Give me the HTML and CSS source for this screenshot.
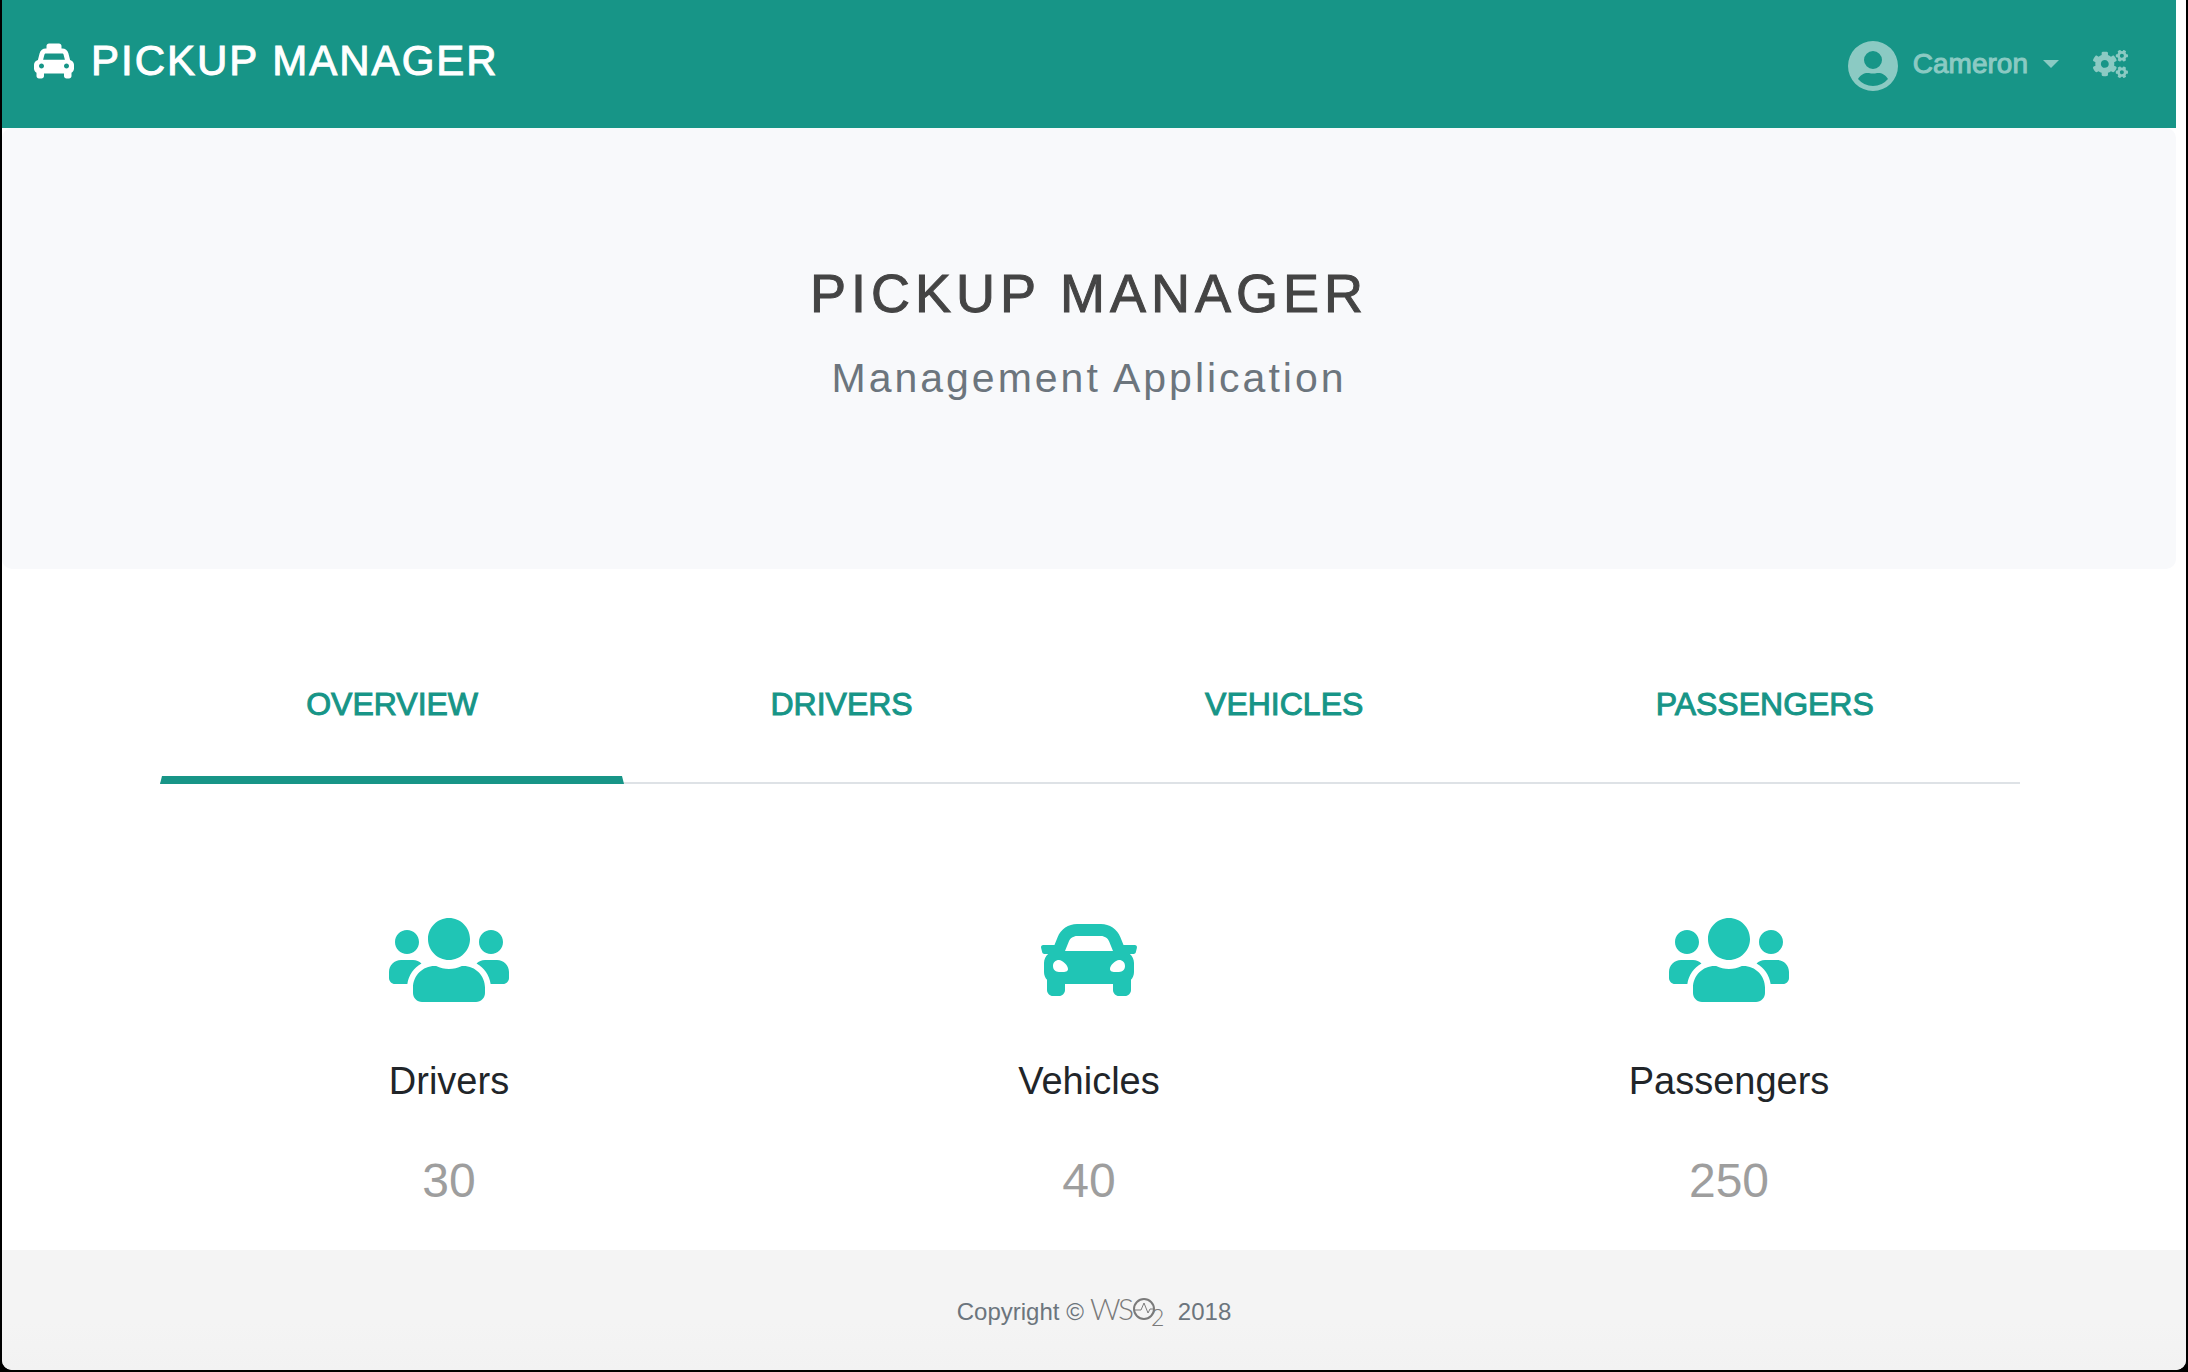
FILE: index.html
```html
<!DOCTYPE html>
<html lang="en">
<head>
<meta charset="utf-8">
<title>Pickup Manager</title>
<link rel="stylesheet" href="styles.css">
</head>
<body>
<svg class="sprite" aria-hidden="true">
  <symbol id="icon-taxi" viewBox="0 0 512 512"><path d="M462 241.640l-22-84.840c-9.600-35.200-41.600-60.800-76.800-60.800H352V64c0-17.670-14.330-32-32-32H192c-17.670 0-32 14.330-32 32v32h-11.200c-35.200 0-67.200 25.600-76.800 60.800l-22 84.840C21.410 248.040 0 273.470 0 304v48c0 23.630 12.950 44.040 32 55.120V448c0 17.670 14.330 32 32 32h32c17.670 0 32-14.330 32-32v-32h256v32c0 17.670 14.330 32 32 32h32c17.670 0 32-14.330 32-32v-40.880c19.050-11.090 32-31.500 32-55.120v-48c0-30.530-21.410-55.960-50-62.360zM96 352c-17.670 0-32-14.330-32-32s14.330-32 32-32 32 14.330 32 32-14.330 32-32 32zm20.550-112l17.200-66.360c2.230-8.160 9.590-13.640 15.060-13.640h214.400c5.470 0 12.830 5.480 14.850 12.860L395.480 240H116.550zM416 352c-17.670 0-32-14.330-32-32s14.330-32 32-32 32 14.330 32 32-14.330 32-32 32z"/></symbol>
  <symbol id="icon-car" viewBox="0 0 512 512"><path d="M499.990 176h-59.870l-16.640-41.600C406.380 91.630 365.570 64 319.500 64h-127c-46.060 0-86.880 27.630-103.990 70.400L71.870 176H12.010C4.200 176-1.530 183.340.370 190.910l6 24C7.700 220.250 12.500 224 18.010 224h20.070C24.650 235.730 16 252.780 16 272v48c0 16.120 6.160 30.670 16 41.930V416c0 17.670 14.330 32 32 32h32c17.670 0 32-14.330 32-32v-32h256v32c0 17.670 14.330 32 32 32h32c17.670 0 32-14.330 32-32v-54.070c9.840-11.250 16-25.800 16-41.930v-48c0-19.220-8.650-36.270-22.070-48H494c5.510 0 10.310-3.750 11.640-9.090l6-24c1.890-7.570-3.840-14.910-11.650-14.910zm-352.060-17.830c7.290-18.220 24.940-30.170 44.570-30.170h127c19.630 0 37.280 11.950 44.570 30.170L384 208H128l19.930-49.830zM96 319.800c-19.200 0-32-12.760-32-31.900S76.800 256 96 256s48 28.710 48 47.850-28.800 15.950-48 15.950zm320 0c-19.200 0-48 3.190-48-15.950S396.800 256 416 256s32 12.760 32 31.900-12.800 31.900-32 31.900z"/></symbol>
  <symbol id="icon-users" viewBox="0 0 640 512"><path d="M96 224c35.300 0 64-28.700 64-64s-28.700-64-64-64-64 28.700-64 64 28.700 64 64 64zm448 0c35.300 0 64-28.700 64-64s-28.700-64-64-64-64 28.700-64 64 28.700 64 64 64zm32 32h-64c-17.600 0-33.500 7.100-45.100 18.600 40.300 22.100 68.900 62 75.100 109.400h66c17.700 0 32-14.300 32-32v-32c0-35.300-28.700-64-64-64zm-256 0c61.900 0 112-50.100 112-112S381.900 32 320 32 208 82.100 208 144s50.100 112 112 112zm76.800 32h-8.300c-20.800 10-43.900 16-68.500 16s-47.600-6-68.500-16h-8.300C179.600 288 128 339.600 128 403.200V432c0 26.500 21.500 48 48 48h288c26.500 0 48-21.500 48-48v-28.800c0-63.600-51.600-115.200-115.200-115.200zm-223.700-13.400C161.500 263.100 145.600 256 128 256H64c-35.300 0-64 28.700-64 64v32c0 17.700 14.300 32 32 32h65.900c6.300-47.400 34.900-87.300 75.200-109.400z"/></symbol>
  <symbol id="icon-cogs" viewBox="0 0 640 512">
    <path id="small-cog" d="M512.100 191l-8.200 14.300c-3 5.300-9.400 7.500-15.100 5.400-11.800-4.400-22.600-10.700-32.100-18.600-4.600-3.800-5.800-10.500-2.800-15.700l8.200-14.300c-6.900-8-12.300-17.300-15.900-27.400h-16.500c-6 0-11.200-4.300-12.200-10.300-2-12-2.100-24.600 0-37.100 1-6 6.200-10.400 12.200-10.400h16.500c3.600-10.100 9-19.400 15.900-27.400l-8.200-14.300c-3-5.200-1.900-11.900 2.800-15.700 9.500-7.900 20.400-14.200 32.100-18.600 5.700-2.100 12.100.1 15.100 5.400l8.200 14.300c10.500-1.900 21.200-1.900 31.700 0L552 6.300c3-5.300 9.400-7.500 15.100-5.400 11.800 4.400 22.600 10.700 32.100 18.600 4.600 3.800 5.800 10.500 2.800 15.700l-8.200 14.300c6.900 8 12.300 17.300 15.900 27.400h16.500c6 0 11.200 4.300 12.200 10.300 2 12 2.100 24.600 0 37.100-1 6-6.200 10.400-12.200 10.400h-16.500c-3.600 10.100-9 19.400-15.900 27.400l8.200 14.300c3 5.200 1.900 11.900-2.800 15.700-9.500 7.900-20.400 14.200-32.100 18.600-5.700 2.100-12.100-.1-15.100-5.400l-8.200-14.300c-10.400 1.900-21.200 1.900-31.700 0zm-10.500-58.800c38.500 29.600 82.400-14.300 52.800-52.800-38.500-29.700-82.400 14.300-52.800 52.800z"/>
    <use href="#small-cog" y="300"/>
    <path d="M386.300 286.100l33.700 16.800c10.100 5.800 14.500 18.100 10.500 29.100-8.900 24.200-26.400 46.400-42.600 65.800-7.400 8.900-20.200 11.100-30.300 5.300l-29.100-16.800c-16 13.700-34.600 24.600-54.900 31.700v33.600c0 11.600-8.300 21.600-19.700 23.600-24.600 4.200-50.400 4.400-75.900 0-11.500-2-20-11.900-20-23.600V418c-20.300-7.200-38.900-18-54.900-31.700L74 403c-10 5.800-22.900 3.600-30.300-5.300-16.200-19.400-33.300-41.600-42.200-65.700-4-10.900.4-23.200 10.500-29.100l33.300-16.800c-3.900-20.900-3.900-42.400 0-63.400L12 205.800c-10.100-5.800-14.600-18.100-10.500-29 8.900-24.200 26-46.400 42.200-65.800 7.400-8.900 20.200-11.100 30.300-5.300l29.100 16.800c16-13.700 34.600-24.600 54.900-31.700V57.100c0-11.500 8.200-21.500 19.600-23.500 24.600-4.200 50.500-4.400 76-.1 11.500 2 20 11.900 20 23.600v33.600c20.300 7.200 38.900 18 54.900 31.700l29.100-16.800c10-5.800 22.900-3.600 30.300 5.300 16.200 19.400 33.200 41.600 42.100 65.800 4 10.900.1 23.200-10 29.100l-33.700 16.800c3.900 21 3.900 42.500 0 63.500zm-117.600 21.100c59.200-77-28.700-164.900-105.700-105.700-59.200 77 28.700 164.900 105.700 105.700z"/>
  </symbol>
  <symbol id="icon-user" viewBox="0 0 50 50"><path fill-rule="evenodd" d="M25 0a25 25 0 1 1 0 50a25 25 0 1 1 0-50zM25 10a9 9 0 1 0 0 18a9 9 0 1 0 0-18zM10 38Q16 45 25 45T40 38C37 33 33 31.500 29 32Q25 33 21 32C17 31.500 13 33 10 38z"/></symbol>
</svg>

<div class="window">
  <header class="navbar">
    <a class="brand" href="#">
      <svg class="brand-icon" aria-hidden="true"><use href="#icon-taxi"/></svg>
      <span>PICKUP MANAGER</span>
    </a>
    <div class="account">
      <button class="user-menu" type="button">
        <svg class="user-icon" aria-hidden="true"><use href="#icon-user"/></svg>
        <span>Cameron</span>
        <span class="caret"></span>
      </button>
      <button class="settings" type="button" aria-label="Settings">
        <svg class="cogs-icon" aria-hidden="true"><use href="#icon-cogs"/></svg>
      </button>
    </div>
  </header>

  <main class="content">
    <section class="hero">
      <h1 class="hero-title">PICKUP MANAGER</h1>
      <p class="hero-subtitle">Management Application</p>
    </section>

    <div class="container">
      <nav class="tabs">
        <a class="tab tab-active" href="#overview" aria-current="page">OVERVIEW</a>
        <a class="tab" href="#drivers">DRIVERS</a>
        <a class="tab" href="#vehicles">VEHICLES</a>
        <a class="tab" href="#passengers">PASSENGERS</a>
      </nav>
      <section class="stats" id="overview">
        <article class="stat">
          <svg class="stat-icon" aria-hidden="true"><use href="#icon-users"/></svg>
          <h2 class="stat-label">Drivers</h2>
          <p class="stat-value">30</p>
        </article>
        <article class="stat">
          <svg class="stat-icon" aria-hidden="true"><use href="#icon-car"/></svg>
          <h2 class="stat-label">Vehicles</h2>
          <p class="stat-value">40</p>
        </article>
        <article class="stat">
          <svg class="stat-icon" aria-hidden="true"><use href="#icon-users"/></svg>
          <h2 class="stat-label">Passengers</h2>
          <p class="stat-value">250</p>
        </article>
      </section>
    </div>
  </main>

  <footer class="footer">
    <span>Copyright ©</span>
    <svg class="logo" viewBox="0 0 74 30" role="img" aria-label="WSO2">
      <text class="logo-text" x="0" y="22">W</text>
      <text class="logo-text" x="28" y="22">S</text>
      <circle cx="54" cy="11" r="10"/>
      <path d="M45 12h6l3-7l4 10l2-4h4"/>
      <text class="logo-sub" x="61" y="28">2</text>
    </svg>
    <span>2018</span>
  </footer>
</div>
</body>
</html>
```
FILE: styles.css
```css
* {
  box-sizing: border-box;
}

body {
  margin: 0;
  background: #000;
  color: #212529;
  font-family: "Liberation Sans", Arial, sans-serif;
}

h1, h2, p {
  margin: 0;
  font-weight: 400;
}

svg {
  display: block;
  fill: currentColor;
}

button {
  padding: 0;
  border: 0;
  background: none;
  color: inherit;
  font: inherit;
}

.sprite {
  position: absolute;
  width: 0;
  height: 0;
}

.window {
  display: flex;
  flex-direction: column;
  min-height: calc(100vh - 2px);
  margin: 0 2px 2px;
  overflow: hidden;
  border-radius: 0 0 10px 10px;
  background: #fff;
}

/* Top bar */
.navbar {
  display: flex;
  justify-content: space-between;
  height: 128px;
  margin-right: 10px;
  padding: 36px 48px 0 32px;
  background: #179587;
}

.brand {
  display: flex;
  align-items: center;
  gap: 17px;
  height: 50px;
  color: #fff;
  font-size: 42px;
  letter-spacing: 2px;
  line-height: 52px;
  text-decoration: none;
  -webkit-text-stroke: 1px currentColor;
}

.brand-icon {
  width: 40px;
  height: 40px;
}

.account {
  display: flex;
  align-items: center;
  gap: 34px;
  height: 56px;
  color: #8bcac3;
  font-size: 28px;
  line-height: 32px;
}

.user-menu {
  display: flex;
  align-items: center;
  gap: 15px;
  -webkit-text-stroke: 1px currentColor;
}

.user-icon {
  width: 50px;
  height: 50px;
  margin-top: 4px;
}

.caret {
  border: 8px solid transparent;
  border-top-color: currentColor;
  border-bottom: 0;
}

.cogs-icon {
  width: 35px;
  height: 28px;
}

/* Hero */
.content {
  flex: 1;
  margin-right: 10px;
}

.hero {
  padding: 133px 0 167px;
  border-radius: 10px;
  background: #f8f9fb;
  text-align: center;
}

.hero-title {
  margin-bottom: 29px;
  color: #444;
  font-size: 54px;
  letter-spacing: 5px;
  line-height: 64px;
  -webkit-text-stroke: 1px currentColor;
}

.hero-subtitle {
  color: #6c757d;
  font-size: 41px;
  font-weight: 300;
  letter-spacing: 3px;
  line-height: 48px;
}

/* Tabs */
.container {
  max-width: 1920px;
  margin: 0 auto;
  padding-top: 63px;
}

.tabs {
  display: flex;
  margin: 0 29px 0 31px;
  border-bottom: 2px solid #dee2e6;
}

.tab {
  flex: 1 1 auto;
  margin-bottom: -2px;
  padding: 48px 0;
  border: solid transparent;
  border-width: 0 2px 8px;
  color: #179587;
  font-size: 32px;
  line-height: 48px;
  text-align: center;
  text-decoration: none;
  -webkit-text-stroke: 1px currentColor;
}

.tab-active {
  border-bottom-color: #179587;
}

/* Overview counters */
.stats {
  display: grid;
  grid-template-columns: repeat(3, 1fr);
  padding: 128px 0 40px;
}

.stat {
  display: flex;
  flex-direction: column;
  align-items: center;
  gap: 48px;
}

.stat-icon {
  width: 120px;
  height: 96px;
  color: #20c5b5;
}

.stat-label {
  font-size: 38px;
  line-height: 50px;
}

.stat-value {
  color: #9e9e9e;
  font-size: 48px;
  line-height: 54px;
}

/* Footer */
.footer {
  display: flex;
  align-items: center;
  justify-content: center;
  gap: 6px;
  height: 120px;
  padding-top: 4px;
  background: linear-gradient(#f4f4f4 60%, #f2f2f2);
  color: #6c757d;
  font-size: 24px;
  line-height: 32px;
}

.logo {
  width: 74px;
  height: 30px;
  margin: 2px 8px 0 0;
  overflow: visible;
  fill: none;
  stroke: #7a7a7a;
  stroke-width: 2px;
}

.logo path {
  stroke-width: 1px;
}

.logo text {
  fill: #7a7a7a;
  stroke: none;
  font-family: Lato, sans-serif;
  font-weight: 300;
}

.logo-text {
  font-size: 30px;
}

.logo-sub {
  font-size: 23px;
}
```
